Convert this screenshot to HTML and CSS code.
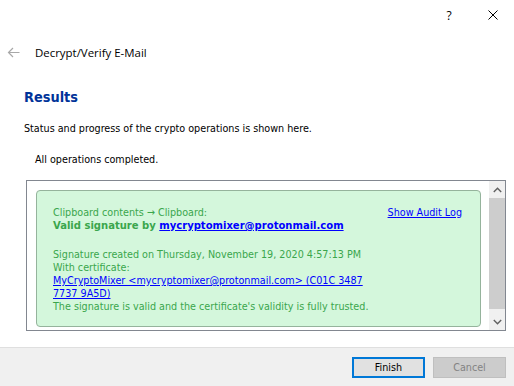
FILE: index.html
```html
<!DOCTYPE html>
<html lang="en">
<head>
<meta charset="utf-8">
<title>Decrypt/Verify E-Mail</title>
<link rel="stylesheet" href="styles.css">
</head>
<body>
<div class="window">
  <div class="titlebar">
    <span class="cap-btn help">?</span>
    <span class="cap-btn close">
      <svg width="10" height="10" viewBox="0 0 10 10"><path d="M0.5 0.5 L9.5 9.5 M9.5 0.5 L0.5 9.5" stroke="#000" stroke-width="1" fill="none"/></svg>
    </span>
  </div>
  <div class="header">
    <span class="back">
      <svg width="13" height="11" viewBox="0 0 13 11"><path d="M12.5 5.5 H1.5 M6 1 L1.5 5.5 L6 10" stroke="#a8a8a8" stroke-width="1.2" fill="none"/></svg>
    </span>
    <span class="header-title">Decrypt/Verify E-Mail</span>
  </div>
  <div class="page">
    <h1 class="heading">Results</h1>
    <p class="desc">Status and progress of the crypto operations is shown here.</p>
    <p class="status">All operations completed.</p>
    <div class="panel">
      <div class="result">
        <div class="result-text">
          <p class="para">Clipboard contents &rarr; Clipboard:<br>
            <span class="strong">Valid signature by <a class="link bold-link" href="#">mycryptomixer@protonmail.com</a></span></p>
          <p class="para">Signature created on Thursday, November 19, 2020 4:57:13 PM<br>
            With certificate:<br>
            <a class="link" href="#">MyCryptoMixer &lt;mycryptomixer@protonmail.com&gt; (C01C 3487 7737 9A5D)</a><br>
            The signature is valid and the certificate's validity is fully trusted.</p>
        </div>
        <a class="link audit" href="#">Show Audit Log</a>
      </div>
      <div class="scrollbar">
        <span class="sb-arrow">
          <svg width="9" height="6" viewBox="0 0 9 6"><path d="M0.8 5 L4.5 1.3 L8.2 5" stroke="#606060" stroke-width="1.4" fill="none"/></svg>
        </span>
        <span class="sb-track"><span class="sb-thumb"></span></span>
        <span class="sb-arrow">
          <svg width="9" height="6" viewBox="0 0 9 6"><path d="M0.8 1 L4.5 4.7 L8.2 1" stroke="#606060" stroke-width="1.4" fill="none"/></svg>
        </span>
      </div>
    </div>
  </div>
  <div class="footer">
    <button class="btn btn-default" type="button">Finish</button>
    <button class="btn btn-disabled" type="button" disabled>Cancel</button>
  </div>
</div>
</body>
</html>
```
FILE: styles.css
```css
html, body {
  margin: 0;
  padding: 0;
  background: #ffffff;
}

body {
  font-family: "DejaVu Sans Condensed", "DejaVu Sans", sans-serif;
  font-size: 10.7px;
  line-height: 13px;
  color: #000000;
}

.window {
  width: 514px;
  height: 386px;
  display: flex;
  flex-direction: column;
  overflow: hidden;
}

/* caption bar */
.titlebar {
  height: 30px;
  display: flex;
  justify-content: flex-end;
  align-items: center;
  padding-top: 0;
}

.cap-btn {
  display: flex;
  align-items: center;
  justify-content: center;
  height: 28px;
}

.help {
  width: 46px;
  font-family: "Open Sans", "Noto Sans", sans-serif;
  font-size: 12px;
  padding-left: 1px;
}

.close {
  width: 42px;
}

/* header */
.header {
  height: 44px;
  display: flex;
  align-items: center;
}

.back {
  width: 35px;
  display: flex;
  justify-content: flex-start;
  padding-left: 7px;
  box-sizing: border-box;
}

.header-title {
  font-family: "Open Sans", "Noto Sans", sans-serif;
  font-size: 11.45px;
}

/* page */
.page {
  padding: 0 0 0 24px;
}

.heading {
  margin: 14px 0 0;
  font-size: 14.4px;
  line-height: 18px;
  font-weight: bold;
  color: #003399;
}

.desc {
  margin: 16px 0 0;
}

.status {
  margin: 18px 0 0;
  padding-left: 11px;
}

.panel {
  margin-top: 14px;
  margin-left: 2px;
  width: 480px;
  height: 151px;
  box-sizing: border-box;
  border: 1px solid #828790;
  background: #ffffff;
  display: flex;
  overflow: hidden;
}

.result {
  margin: 9px 8px 0 9px;
  width: 445px;
  height: 137px;
  box-sizing: border-box;
  border: 1px solid #95b39c;
  border-radius: 4px;
  background: #d4f7dc;
  padding: 15px 18px 0 16px;
  display: flex;
  align-items: flex-start;
  color: #3aa64c;
}

.result-text {
  width: 322px;
}

.para {
  margin: 0;
}

.para + .para {
  margin-top: 16px;
}

.strong {
  font-weight: bold;
  font-size: 11.15px;
}

.link {
  color: #0000ff;
  text-decoration: underline;
}

.bold-link {
  font-weight: bold;
}

.audit {
  margin-left: 13px;
  white-space: nowrap;
}

/* scrollbar */
.scrollbar {
  width: 16px;
  height: 149px;
  background: #f0f0f0;
  display: flex;
  flex-direction: column;
}

.sb-arrow {
  height: 17px;
  display: flex;
  align-items: center;
  justify-content: center;
}

.sb-track {
  flex: 1;
  display: flex;
  flex-direction: column;
}

.sb-thumb {
  height: 111px;
  background: #cdcdcd;
}

/* footer */
.footer {
  margin-top: auto;
  height: 39px;
  box-sizing: border-box;
  border-top: 1px solid #dfdfdf;
  background: #f0f0f0;
  display: flex;
  justify-content: flex-end;
  align-items: flex-start;
  gap: 8px;
  padding: 9px 8px 0 0;
}

.btn {
  width: 73px;
  height: 21px;
  box-sizing: border-box;
  font-family: "DejaVu Sans Condensed", "DejaVu Sans", sans-serif;
  font-size: 10.7px;
  padding: 0;
  margin: 0;
}

.btn-default {
  border: 2px solid #0078d7;
  background: #e1e1e1;
  color: #000000;
}

.btn-disabled {
  border: 1px solid #bfbfbf;
  background: #cccccc;
  color: #838383;
}
```
